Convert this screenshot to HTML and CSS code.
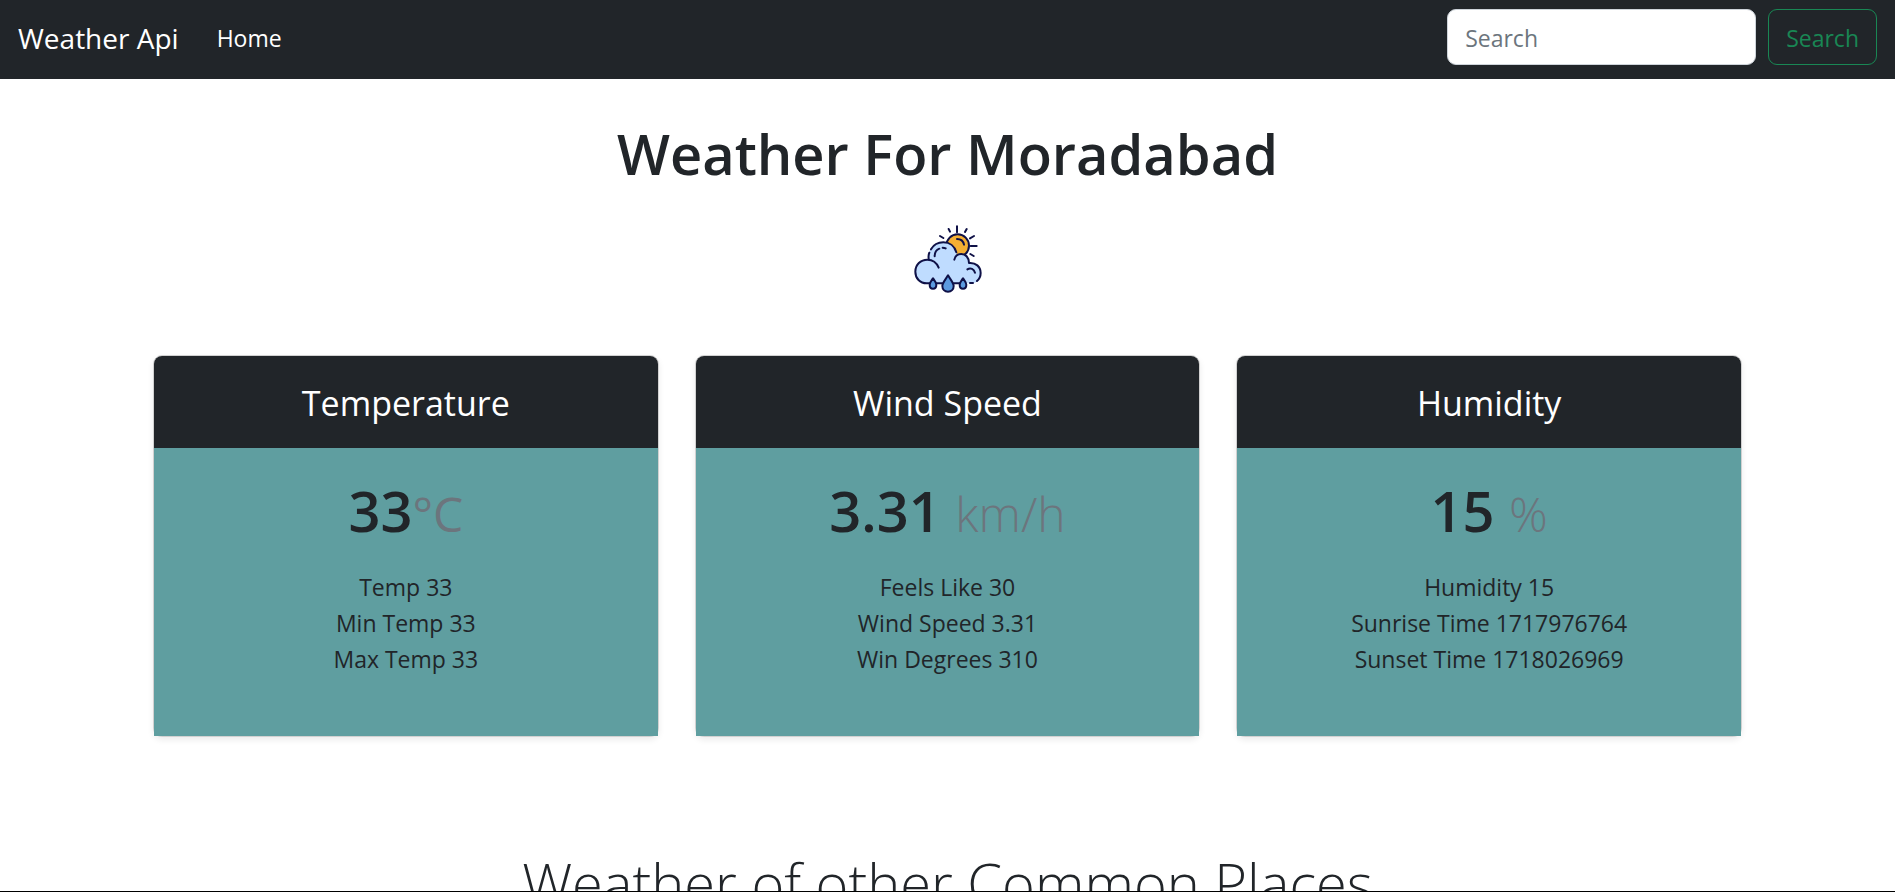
FILE: index.html
```html
<!DOCTYPE html>
<html lang="en">
<head>
<meta charset="utf-8">
<meta name="viewport" content="width=device-width, initial-scale=1">
<title>Weather Api</title>
<link rel="stylesheet" href="styles.css">
</head>
<body>
<nav class="navbar">
  <a class="brand" href="#">Weather Api</a>
  <a class="nav-link" href="#">Home</a>
  <form class="search" role="search">
    <input class="search-input" type="search" placeholder="Search" aria-label="Search">
    <button class="search-button" type="submit">Search</button>
  </form>
</nav>
<main class="page">
  <h1 class="title">Weather For Moradabad</h1>
  <svg class="weather-icon" viewBox="36 27 213 213" fill="none" stroke="#0f1147" stroke-width="6" stroke-linecap="round" stroke-linejoin="round" role="img" aria-label="Partly sunny with rain">
    <circle cx="173" cy="92" r="34" fill="#f5af33"/>
    <path d="M171 34v18M146 42l4 8M200 42l-5 9M120 63l10 6M222 63l-12 7M212 93h18M211 117l10 6"/>
    <path d="M171 72c11 0 19 7 21 17"/>
    <path d="M80 205C60 205 46 190 46 170C46 149 62 134 85 134C82 105 101 82 130 82C151 82 167 96 171 118C188 112 206 125 207 144C227 140 242 154 242 174C242 191 232 205 216 205Z" fill="#bfdcff" stroke="none"/>
    <path d="M89 205H80C60 205 46 190 46 170C46 149 62 134 82 134C98 134 110 143 116 158"/>
    <path d="M86 131C85 124 86 118 88 113M93 103C101 89 114 82 130 82C149 82 164 94 169 112"/>
    <path d="M104 124C104 112 110 104 118 101M128 98Q133 98 137 100"/>
    <path d="M163 134C165 123 173 117 184 117C197 117 207 128 207 144C227 142 242 155 242 174C242 184 238 192 231 198M219 204H210"/>
    <path d="M202 163C212 157 222 162 225 173M109 205H127M161 205H180"/>
    <path d="M99 190C94 198 89 202 89 209C89 216 93 221 99 221C105 221 109 216 109 209C109 202 104 198 99 190Z" fill="#5c9be0"/>
    <path d="M144 181C136 195 127 204 127 213C127 223 134 230 144 230C154 230 161 223 161 213C161 204 152 195 144 181Z" fill="#5c9be0"/>
    <path d="M189 190C184 198 179 202 179 209C179 216 183 221 189 221C195 221 199 216 199 209C199 202 194 198 189 190Z" fill="#5c9be0"/>
  </svg>
  <section class="cards">
    <article class="card">
      <h2 class="card-header">Temperature</h2>
      <div class="card-body">
        <p class="value">33<small class="unit unit-regular">°C</small></p>
        <ul class="details"><li>Temp 33</li><li>Min Temp 33</li><li>Max Temp 33</li></ul>
      </div>
    </article>
    <article class="card">
      <h2 class="card-header">Wind Speed</h2>
      <div class="card-body">
        <p class="value">3.31 <small class="unit">km/h</small></p>
        <ul class="details"><li>Feels Like 30</li><li>Wind Speed 3.31</li><li>Win Degrees 310</li></ul>
      </div>
    </article>
    <article class="card">
      <h2 class="card-header">Humidity</h2>
      <div class="card-body">
        <p class="value">15 <small class="unit">%</small></p>
        <ul class="details"><li>Humidity 15</li><li>Sunrise Time 1717976764</li><li>Sunset Time 1718026969</li></ul>
      </div>
    </article>
  </section>
  <h2 class="subtitle">Weather of other Common Places</h2>
</main>
</body>
</html>
```

FILE: styles.css
```css
* { box-sizing: border-box; }

body {
  display: flex;
  flex-direction: column;
  height: 100vh;
  margin: 0;
  overflow: hidden;
  border-bottom: 1px solid #000;
  background: #fff;
  color: #212529;
  font: 400 23px/36px "Open Sans", "Noto Sans", sans-serif;
}

.navbar {
  display: flex;
  flex-shrink: 0;
  align-items: center;
  padding: 9px 18px 14px;
  background: #212529;
}

.brand,
.nav-link {
  padding-top: 2px;
  color: #fff;
  text-decoration: none;
}

.brand {
  margin-right: 38px;
  font-size: 28px;
}

.search {
  display: flex;
  gap: 12px;
  margin-left: auto;
}

.search-input,
.search-button {
  height: 56px;
  padding: 2px 17px 0;
  border: 1px solid #ced4da;
  border-radius: 9px;
  font: inherit;
}

.search-input {
  width: 309px;
  background: #fff;
  color: #212529;
}

.search-input::placeholder {
  color: #6c757d;
  opacity: 1;
}

.search-button {
  border-color: #198754;
  background: transparent;
  color: #198754;
}

.page {
  flex: 1;
  min-height: 0;
  padding: 38px 153px 0;
  overflow: hidden;
  text-align: center;
}

.title,
.subtitle {
  margin: 0;
  font-size: 56px;
  line-height: 72px;
}

.title { font-weight: 600; }

.subtitle {
  margin-top: 109px;
  font-weight: 300;
}

.weather-icon {
  display: block;
  width: 71px;
  height: 71px;
  margin: 35px auto 60px;
}

.cards {
  display: grid;
  grid-template-columns: repeat(3, 1fr);
  gap: 36px;
}

.card {
  border: 1px solid rgba(0, 0, 0, 0.18);
  border-radius: 9px;
  box-shadow: 0 3px 6px rgba(0, 0, 0, 0.08);
}

.card-header {
  margin: 0;
  padding: 25px 24px 23px;
  border-radius: 8px 8px 0 0;
  background: #212529;
  color: #fff;
  font-size: 34px;
  font-weight: 400;
  line-height: 44px;
}

.card-body {
  padding: 26px 24px 24px;
  background: #5f9ea0;
}

.value {
  margin: 0 0 23px;
  font-size: 56px;
  font-weight: 600;
  line-height: 72px;
}

.unit {
  color: #6c757d;
  font-size: 48px;
  font-weight: 300;
  line-height: 1;
}

.unit-regular { font-weight: 400; }

.details {
  margin: 0 0 35px;
  padding: 0;
  list-style: none;
}
```
